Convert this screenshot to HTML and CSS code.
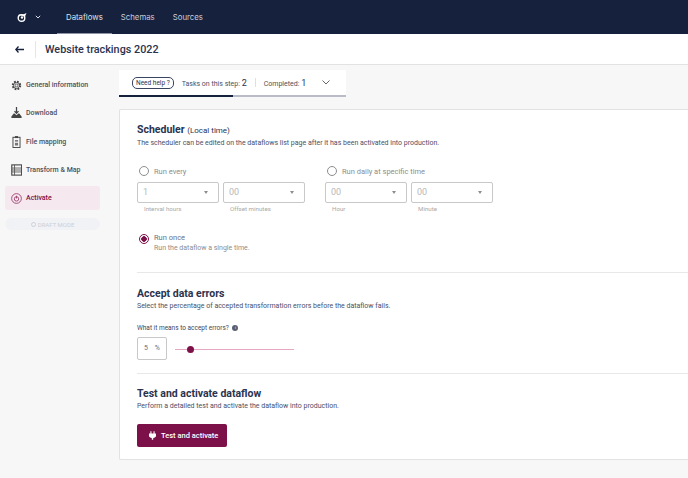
FILE: index.html
```html
<!DOCTYPE html>
<html lang="en">
<head>
  <meta charset="UTF-8">
  <title>Website trackings 2022</title>
  <link rel="stylesheet" href="styles.css">
</head>
<body>
  <nav class="topbar">
    <div class="logo">
      <svg width="10" height="9" viewBox="0 0 10 9"><circle cx="4.500" cy="5" r="3.300" fill="none" stroke="#fff" stroke-width="1.400"/><circle cx="5" cy="4.500" r="1.200" fill="#fff"/><path d="M1 1.500 L5 2 L9.500 0 L8 3.500 Z" fill="#fff"/></svg>
      <svg width="6" height="4" viewBox="0 0 6 4"><path d="M.8 .8 L3 3 L5.200 .8" fill="none" stroke="#dfe1e8" stroke-width="1"/></svg>
    </div>
    <a class="nav-link active">Dataflows</a>
    <a class="nav-link">Schemas</a>
    <a class="nav-link">Sources</a>
  </nav>

  <header class="page-header">
    <svg class="back" width="9" height="7" viewBox="0 0 9 7"><path d="M3.500 .5 L.8 3.500 L3.500 6.500 M1 3.500 H9" fill="none" stroke="#16213e" stroke-width="1.300"/></svg>
    <h1>Website trackings 2022</h1>
  </header>

  <div class="main">
    <aside class="sidebar">
      <div class="step">
        <svg width="11" height="11" viewBox="0 0 14 14"><circle cx="7" cy="7" r="4.700" fill="none" stroke="#444" stroke-width="2.600" stroke-dasharray="2.200 1.500"/><circle cx="7" cy="7" r="3.700" fill="none" stroke="#444" stroke-width="1"/><circle cx="7" cy="7" r="1.700" fill="none" stroke="#444" stroke-width="1"/></svg>
        General information
      </div>
      <div class="step">
        <svg width="11" height="12" viewBox="0 0 14 15"><path d="M7 0 V7 M4.500 5 L7 8 L9.500 5" fill="none" stroke="#444" stroke-width="1.600"/><path d="M3.500 8 H4.500 L7 10.500 L9.500 8 H10.500 L13.500 12 V14 H.5 V12 Z" fill="#444"/></svg>
        Download
      </div>
      <div class="step">
        <svg width="11" height="12" viewBox="0 0 14 15"><rect x="2.500" y="1.500" width="9" height="13" fill="none" stroke="#444" stroke-width="1.200"/><rect x="5" y="0" width="4" height="2.500" fill="#444"/><rect x="5" y="5" width="4" height="2" fill="#777"/><rect x="5" y="8.500" width="4" height="3.500" fill="#777"/></svg>
        File mapping
      </div>
      <div class="step">
        <svg width="11" height="12" viewBox="0 0 14 15"><rect x="1" y="1" width="12.500" height="13" fill="none" stroke="#444" stroke-width="1.400"/><path d="M1 5 H13.500 M1 7.500 H13.500 M1 10 H13.500 M4.500 1 V14" stroke="#555" stroke-width="1.100"/></svg>
        Transform &amp; Map
      </div>
      <div class="step current">
        <svg width="11" height="11" viewBox="0 0 14 14"><circle cx="7" cy="7" r="6.200" fill="none" stroke="#9a3a6b" stroke-width="1.100"/><circle cx="7" cy="7.500" r="2.800" fill="none" stroke="#9a3a6b" stroke-width="1.100"/><path d="M7 3.500 V7" stroke="#9a3a6b" stroke-width="1.100"/></svg>
        Activate
      </div>
      <div class="draft"><span class="draft-dot"></span>DRAFT MODE</div>
    </aside>

    <div class="content">
      <div class="tasks">
        <div class="tasks-row">
          <span class="help">Need help ?</span>
          <span class="task-label">Tasks on this step: <b>2</b></span>
          <span class="task-sep"></span>
          <span class="task-label">Completed: <b>1</b></span>
          <svg class="task-caret" width="8" height="5" viewBox="0 0 8 5"><path d="M.5 .5 L4 4 L7.500 .5" fill="none" stroke="#666" stroke-width="1"/></svg>
        </div>
        <div class="progress"><div class="progress-done"></div></div>
      </div>

      <section class="card">
        <div class="block">
          <h2>Scheduler <small>(Local time)</small></h2>
          <p class="desc">The scheduler can be edited on the dataflows list page after it has been activated into production.</p>

          <div class="schedule-cols">
            <div class="schedule-col">
              <label class="radio"><span class="radio-dot"></span>Run every</label>
              <div class="selects">
                <div class="field"><div class="select">1<i class="caret"></i></div><span class="hint">Interval hours</span></div>
                <div class="field"><div class="select">00<i class="caret"></i></div><span class="hint">Offset minutes</span></div>
              </div>
            </div>
            <div class="schedule-col">
              <label class="radio"><span class="radio-dot"></span>Run daily at specific time</label>
              <div class="selects">
                <div class="field"><div class="select">00<i class="caret"></i></div><span class="hint">Hour</span></div>
                <div class="field"><div class="select">00<i class="caret"></i></div><span class="hint">Minute</span></div>
              </div>
            </div>
          </div>

          <div class="run-once">
            <span class="radio-dot checked"></span>
            <div>
              <div class="run-once-title">Run once</div>
              <div class="run-once-sub">Run the dataflow a single time.</div>
            </div>
          </div>
        </div>

        <div class="block errors">
          <h2>Accept data errors</h2>
          <p class="desc">Select the percentage of accepted transformation errors before the dataflow fails.</p>
          <div class="what">What it means to accept errors? <span class="info">i</span></div>
          <div class="slider-row">
            <div class="percent"><span>5</span><span>%</span></div>
            <div class="slider"><span class="thumb"></span></div>
          </div>
        </div>

        <div class="block activate">
          <h2>Test and activate dataflow</h2>
          <p class="desc">Perform a detailed test and activate the dataflow into production.</p>
          <button class="btn">
            <svg width="7" height="9" viewBox="0 0 10 12"><path d="M2 0 H3.500 V3 H6.500 V0 H8 V3 H10 V6.500 C10 8.500 8 9.500 6 9.500 V12 H4 V9.500 C2 9.500 0 8.500 0 6.500 V3 H2 Z" fill="#fff"/></svg>
            Test and activate
          </button>
        </div>
      </section>
    </div>
  </div>
</body>
</html>
```

FILE: styles.css
```css
* {
  box-sizing: border-box;
}

html, body {
  margin: 0;
  height: 100%;
  overflow: hidden;
}

body {
  width: 688px;
  height: 478px;
  background-color: #f7f7f7;
  color: #16213e;
  font-family: Roboto, "Liberation Sans", sans-serif;
}

.topbar {
  display: flex;
  align-items: stretch;
  height: 34px;
  padding-left: 17px;
  background-color: #16213e;
  box-shadow: 0 1px 2px rgba(0, 0, 0, 0.3);
}

.logo {
  display: flex;
  align-items: center;
  gap: 8px;
  width: 40px;
}

.nav-link {
  display: flex;
  align-items: center;
  padding: 0 9px;
  color: #c9ccd6;
  font-family: Inter, sans-serif;
  font-size: 7.800px;
}

.nav-link.active {
  color: #dfe1e8;
  border-bottom: 1px solid #8f93a3;
}

.page-header {
  display: flex;
  align-items: center;
  height: 31px;
  background-color: #fff;
  border-bottom: 1px solid #e2e2e2;
}

.back {
  margin-left: 15px;
  margin-right: 11px;
}

.page-header h1 {
  margin: 0;
  padding-left: 9px;
  border-left: 1px solid #e6e6e6;
  font-size: 10.800px;
  line-height: 17px;
  font-weight: 500;
  color: #2a3350;
}

.main {
  display: flex;
}

.sidebar {
  width: 119px;
  flex-shrink: 0;
  padding: 6px 19px 0 5px;
}

.step {
  display: flex;
  align-items: center;
  gap: 4px;
  height: 28.300px;
  padding-left: 6px;
  color: #4a5060;
  font-size: 7px;
  font-weight: 500;
}

.step svg {
  flex-shrink: 0;
}

.step.current {
  height: 24px;
  margin-top: 2px;
  border-radius: 3px;
  background-color: #f5e8ee;
  color: #7b1148;
}

.draft {
  display: flex;
  align-items: center;
  justify-content: center;
  gap: 2px;
  height: 12px;
  margin-top: 8px;
  border-radius: 6px;
  background-color: #f0f2f6;
  color: #cdd0d7;
  font-size: 6px;
}

.draft-dot {
  width: 5px;
  height: 5px;
  border: 1px solid #cdd0d7;
  border-radius: 50%;
}

.content {
  flex: 1;
  padding-top: 5px;
}

.tasks {
  width: 227px;
  background-color: #fff;
}

.tasks-row {
  display: flex;
  align-items: center;
  height: 25px;
  padding-left: 13px;
  font-size: 7px;
  color: #4a5060;
}

.help {
  padding: 1px 3px;
  margin-right: 8px;
  border: 1px solid #3a4560;
  border-radius: 5px;
  color: #2a3350;
  font-size: 6.500px;
  line-height: 8px;
}

.task-label b {
  font-size: 9px;
  font-weight: 400;
  color: #2a3350;
}

.task-sep {
  width: 1px;
  height: 9px;
  margin: 0 8px;
  background-color: #e0e0e0;
}

.task-caret {
  margin-left: 16px;
}

.progress {
  height: 2px;
  background-color: #b9bcc6;
}

.progress-done {
  width: 114px;
  height: 2px;
  background-color: #16213e;
}

.card {
  margin-top: 12px;
  height: 351px;
  padding: 0 0 0 17px;
  background-color: #fff;
  border: 1px solid #e2e2e2;
  border-right: none;
  border-radius: 2px 0 0 2px;
}

.block {
  height: 163px;
  padding-top: 13px;
  border-bottom: 1px solid #e8e8e8;
}

.block h2 {
  margin: 0;
  font-size: 10.500px;
  line-height: 13px;
  font-weight: 700;
  color: #2a3350;
}

.block h2 small {
  font-size: 8px;
  font-weight: 400;
}

.desc {
  margin: 2px 0 0;
  font-size: 7px;
  line-height: 9px;
  color: #4a5068;
}

.schedule-cols {
  display: flex;
  gap: 20px;
  margin-top: 17px;
}

.radio {
  display: flex;
  align-items: center;
  gap: 5px;
  height: 12px;
  color: #8d8d8d;
  font-size: 7.500px;
}

.radio-dot {
  display: inline-block;
  flex-shrink: 0;
  width: 10px;
  height: 10px;
  margin-left: 2px;
  border: 1px solid #8d8d8d;
  border-radius: 50%;
}

.radio-dot.checked {
  border-color: #7b1148;
  background: radial-gradient(circle, #7b1148 0 2.500px, #fff 3px);
}

.selects {
  display: flex;
  gap: 4px;
  margin-top: 5px;
}

.field {
  display: flex;
  flex-direction: column;
}

.select {
  position: relative;
  width: 82px;
  height: 21px;
  padding-left: 5px;
  border: 1px solid #c8c8c8;
  border-radius: 2px;
  color: #b8b8b8;
  font-size: 9px;
  line-height: 19px;
}

.caret {
  position: absolute;
  right: 10px;
  top: 8px;
  border-left: 2.500px solid transparent;
  border-right: 2.500px solid transparent;
  border-top: 3px solid #8d8d8d;
}

.hint {
  margin-top: 2px;
  padding-left: 7px;
  color: #a9a9a9;
  font-size: 6.200px;
  line-height: 8px;
}

.run-once {
  display: flex;
  gap: 5px;
  margin-top: 19px;
}

.run-once .radio-dot {
  margin-top: 2px;
}

.run-once-title {
  color: #6c7080;
  font-size: 7.500px;
  line-height: 12px;
}

.run-once-sub {
  color: #8d8d8d;
  font-size: 7px;
  line-height: 8px;
}

.errors {
  height: 101px;
  padding-top: 14px;
}

.what {
  margin-top: 13px;
  font-size: 6.500px;
  line-height: 9px;
  color: #3f4658;
}

.info {
  display: inline-block;
  width: 6px;
  height: 6px;
  margin-left: 2px;
  border-radius: 50%;
  background-color: #5a6070;
  color: #fff;
  font-size: 4px;
  line-height: 6px;
  text-align: center;
  vertical-align: middle;
}

.slider-row {
  display: flex;
  align-items: center;
  gap: 8px;
  margin-top: 4px;
}

.percent {
  display: flex;
  justify-content: space-between;
  width: 30px;
  height: 23px;
  padding: 0 6px;
  border: 1px solid #c8c8c8;
  border-radius: 2px;
  color: #6c7080;
  font-size: 7px;
  line-height: 21px;
}

.slider {
  position: relative;
  width: 119px;
  height: 1px;
  margin-top: 1px;
  background-color: #e7a6c2;
}

.thumb {
  position: absolute;
  left: 12px;
  top: -3px;
  width: 7px;
  height: 7px;
  border-radius: 50%;
  background-color: #7b1148;
}

.activate {
  height: auto;
  padding-top: 13px;
  border-bottom: none;
}

.btn {
  display: flex;
  align-items: center;
  gap: 5px;
  width: 90px;
  height: 23px;
  margin-top: 13px;
  padding: 0 0 0 12px;
  border: none;
  border-radius: 2px;
  background-color: #7b1148;
  color: #fff;
  font-family: Roboto, sans-serif;
  font-size: 7.500px;
  font-weight: 500;
}
```
